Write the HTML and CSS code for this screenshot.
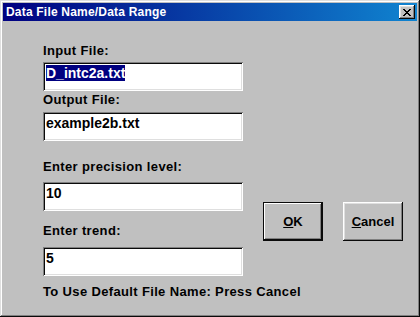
FILE: index.html
```html
<!DOCTYPE html>
<html lang="en">
<head>
  <meta charset="UTF-8" />
  <title>Data File Name/Data Range</title>
  <link rel="stylesheet" href="styles.css">
</head>
<body>
  <div class="dialog">
    <div class="titlebar">
      <span class="title">Data File Name/Data Range</span>
      <button class="close" aria-label="Close">
        <svg width="8" height="7" viewBox="0 0 8 7">
          <path d="M0 0h2v1h1v1h2v-1h1v-1h2v1h-1v1h-1v1h-1v1h1v1h1v1h1v1h-2v-1h-1v-1h-2v1h-1v1h-2v-1h1v-1h1v-1h1v-1h-1v-1h-1v-1h-1z" fill="#000"/>
        </svg>
      </button>
    </div>

    <div class="content">
      <div class="row">
        <div class="fields">
          <label class="label first">Input File:</label>
          <div class="field"><span class="sel">D_intc2a.txt</span></div>

          <label class="label second">Output File:</label>
          <div class="field">example2b.txt</div>

          <label class="label third">Enter precision level:</label>
          <div class="field">10</div>

          <label class="label fourth">Enter trend:</label>
          <div class="field">5</div>
        </div>

        <div class="buttons">
          <button class="btn default"><u>O</u>K</button>
          <button class="btn"><u>C</u>ancel</button>
        </div>
      </div>

      <p class="footer">To Use Default File Name: Press Cancel</p>
    </div>
  </div>
</body>
</html>
```

FILE: styles.css
```css
:root {
  --face: #c0c0c0;
  --shadow: #808080;
  --dark: #0a0a0a;
  --light: #dfdfdf;
  --navy: #000080;
}

* {
  box-sizing: border-box;
}

body {
  margin: 0;
  background: var(--face);
  font-family: 'Liberation Sans', Arial, sans-serif;
  font-weight: bold;
  color: #000;
}

.dialog {
  width: 420px;
  height: 317px;
  padding: 3px;
  background: var(--face);
  box-shadow:
    inset -1px -1px var(--dark),
    inset 1px 1px var(--light),
    inset -2px -2px var(--shadow),
    inset 2px 2px #fff;
}

.titlebar {
  display: flex;
  align-items: center;
  justify-content: space-between;
  height: 18px;
  padding: 0 2px 0 3px;
  background: linear-gradient(90deg, var(--navy), #1084d0);
}

.title {
  color: #fff;
  font-size: 12px;
  line-height: 18px;
  letter-spacing: 0.2px;
}

.close {
  display: flex;
  align-items: center;
  justify-content: center;
  width: 16px;
  height: 14px;
  padding: 0;
  border: none;
  background: var(--face);
  box-shadow:
    inset -1px -1px var(--dark),
    inset 1px 1px #fff,
    inset -2px -2px var(--shadow),
    inset 2px 2px var(--light);
}

.content {
  padding: 22px 0 0 40px;
}

.row {
  display: flex;
  gap: 20px;
}

.fields {
  display: flex;
  flex-direction: column;
  width: 200px;
}

.label {
  font-size: 13px;
  line-height: 15px;
  letter-spacing: 0.35px;
}

.label.first { margin-bottom: 4px; }
.label.second { margin: 1px 0 5px; }
.label.third { margin: 18px 0 8px; }
.label.fourth { margin: 12px 0 9px; }

.field {
  height: 29px;
  padding: 3px 3px 0;
  background: #fff;
  font-size: 14px;
  line-height: 16px;
  box-shadow:
    inset 1px 1px var(--shadow),
    inset -1px -1px #fff,
    inset 2px 2px var(--dark),
    inset -2px -2px var(--light);
}

.sel {
  background: var(--navy);
  color: #fff;
}

.buttons {
  display: flex;
  gap: 20px;
  margin-top: 159px;
  align-self: flex-start;
}

.btn {
  width: 60px;
  height: 39px;
  padding: 0;
  border: none;
  background: var(--face);
  font-family: inherit;
  font-weight: bold;
  font-size: 13px;
  color: #000;
  box-shadow:
    inset -1px -1px var(--dark),
    inset 1px 1px #fff,
    inset -2px -2px var(--shadow),
    inset 2px 2px var(--light);
}

.btn.default {
  box-shadow:
    inset 0 0 0 1px var(--dark),
    inset -2px -2px var(--dark),
    inset 2px 2px #fff,
    inset -3px -3px var(--shadow);
}

.footer {
  margin: 8px 0 0;
  font-size: 13px;
  line-height: 15px;
  letter-spacing: 0.35px;
}
```
